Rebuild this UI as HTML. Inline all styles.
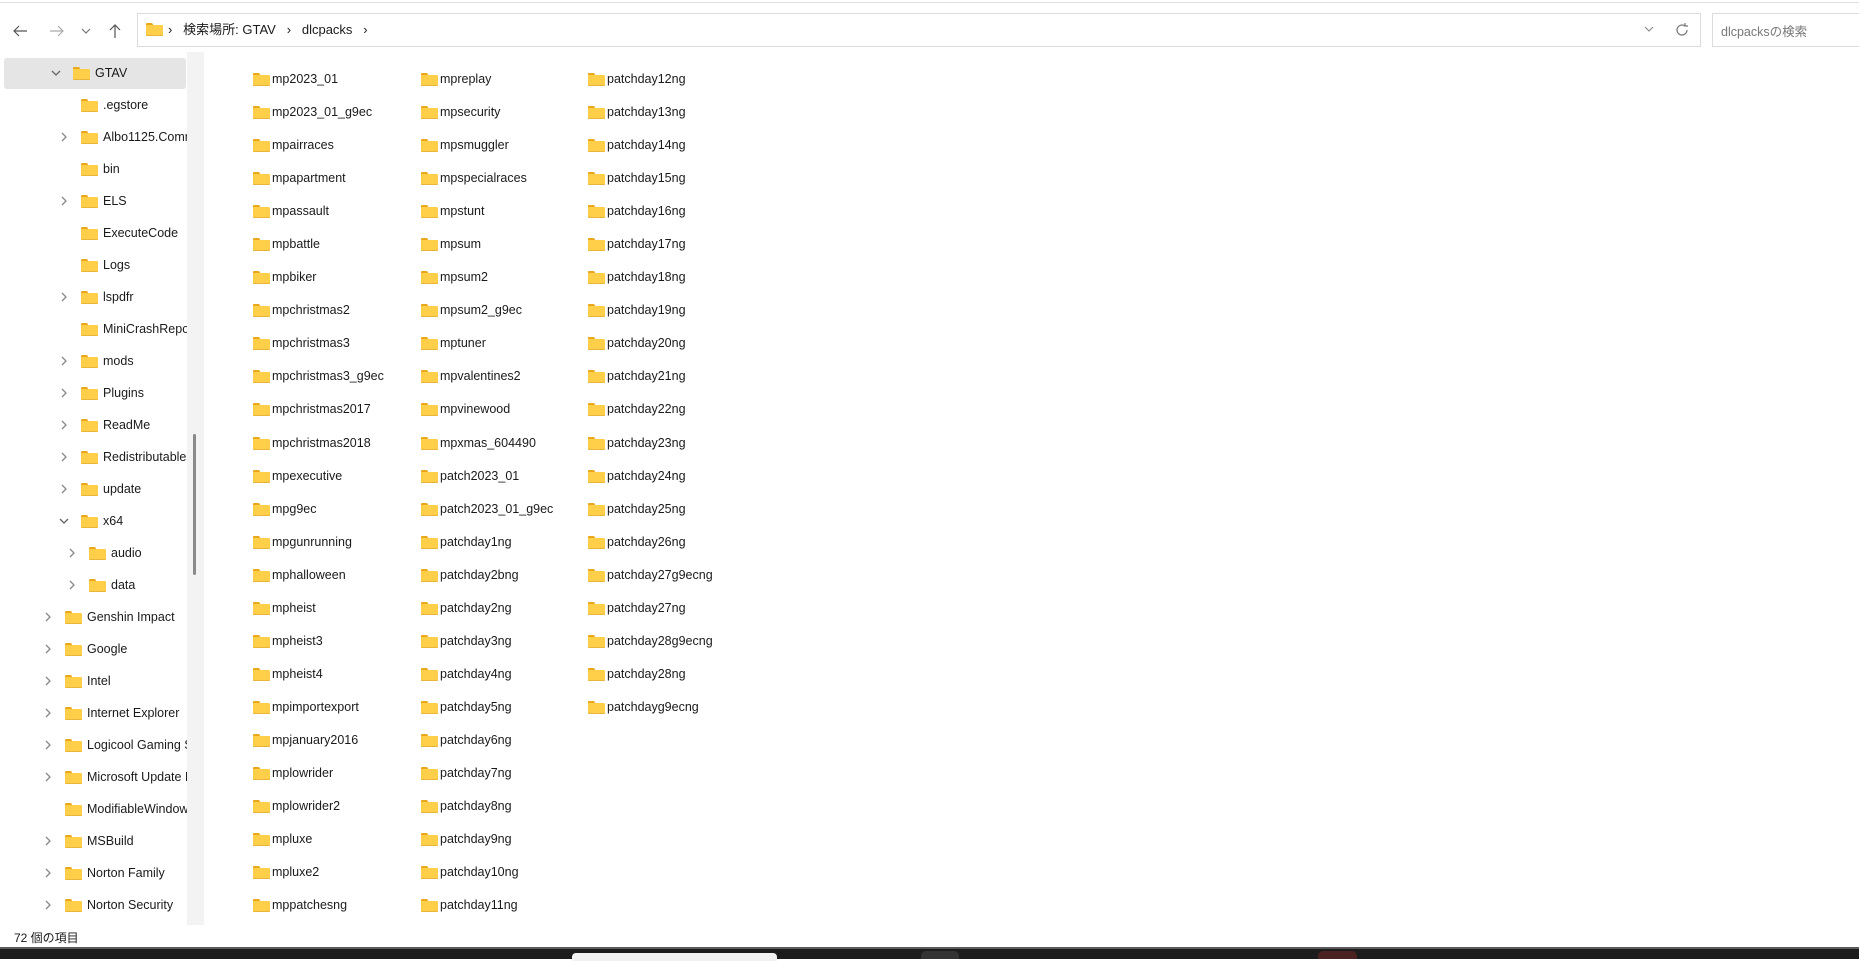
<!DOCTYPE html>
<html><head><meta charset="utf-8"><style>
*{margin:0;padding:0;box-sizing:border-box}
body{width:1859px;height:959px;background:#fff;position:relative;overflow:hidden;font-family:"Liberation Sans","Noto Sans CJK JP",sans-serif;font-size:12.5px;color:#1a1a1a}
.a{position:absolute}
.f{position:absolute;width:17px;height:13px}
.f:before{content:"";position:absolute;left:0;top:0;width:7px;height:4px;background:#e9a81c;border-radius:1px 2px 0 0}
.f:after{content:"";position:absolute;left:0;top:2px;width:17px;height:11px;background:#ffcf4a;border-radius:1px;box-shadow:inset 0 -1px 0 #e9b53a}
.col div{position:relative;height:33.05px;line-height:33px;white-space:nowrap}
.col .f{left:-19px;top:10px}
.sb div{position:absolute;height:32px;line-height:32px;white-space:nowrap}
.sb .f{left:-22px;top:10px}
</style></head><body>
<div class="a" style="left:0;top:2px;width:1859px;height:1px;background:#e0e0e0"></div>
<svg class="a" style="left:0;top:18px" width="140" height="26" stroke-width="1.2" fill="none">
<path d="M27 13H14M19 8l-5 5 5 5" stroke="#555"/>
<path d="M50 13h13M58 8l5 5-5 5" stroke="#aaa"/>
<path d="M82 11l4 4 4-4" stroke="#777"/>
<path d="M115 20V7M110 12l5-5 5 5" stroke="#555"/>
</svg>
<div class="a" style="left:137px;top:13px;width:1564px;height:34px;border:1px solid #dcdcdc"></div>
<div class="f" style="left:146px;top:23px"></div>
<div class="a" style="left:168px;top:20px;line-height:20px;font-size:13px">›&nbsp;&nbsp; 検索場所: GTAV&nbsp;&nbsp; ›&nbsp;&nbsp; dlcpacks&nbsp;&nbsp; ›</div>
<svg class="a" style="left:1643px;top:24px" width="12" height="10" fill="none" stroke="#888" stroke-width="1.1"><path d="M2 3l4 4 4-4"/></svg>
<svg class="a" style="left:1674px;top:22px" width="16" height="16" fill="none" stroke="#777" stroke-width="1.2"><path d="M13 8a5 5 0 1 1-2-4M11 1v3h3"/></svg>
<div class="a" style="left:1712px;top:13px;width:160px;height:34px;border:1px solid #dcdcdc"></div>
<div class="a" style="left:1721px;top:21px;color:#777">dlcpacksの検索</div>

<div class="a" style="left:4px;top:58px;width:182px;height:31px;background:#e5e5e5;border-radius:3px"></div>
<div class="a" style="left:187px;top:52px;width:17px;height:873px;background:#f3f3f3"></div>
<div class="a" style="left:193px;top:434px;width:3px;height:141px;background:#8a8a8a;border-radius:2px"></div>

<svg class="a" style="left:0;top:0" width="90" height="930" fill="none" stroke="#666" stroke-width="1.3">
<path d="M52 71l4 4 4-4M60 519l4 4 4-4"/>
<g stroke="#888">
<path d="M62 133l4 4-4 4M62 197l4 4-4 4M62 293l4 4-4 4M62 357l4 4-4 4M62 389l4 4-4 4M62 421l4 4-4 4M62 453l4 4-4 4M62 485l4 4-4 4"/>
<path d="M70 549l4 4-4 4M70 581l4 4-4 4"/>
<path d="M46 613l4 4-4 4M46 645l4 4-4 4M46 677l4 4-4 4M46 709l4 4-4 4M46 741l4 4-4 4M46 773l4 4-4 4M46 837l4 4-4 4M46 869l4 4-4 4M46 901l4 4-4 4"/>
</g></svg>

<div class="sb">
<div style="left:95px;top:57px"><span class="f"></span>GTAV</div>
<div style="left:103px;top:89px"><span class="f"></span>.egstore</div>
<div style="left:103px;top:121px;width:84px;overflow:hidden">Albo1125.Common</div>
<div style="left:103px;top:153px"><span class="f"></span>bin</div>
<div style="left:103px;top:185px"><span class="f"></span>ELS</div>
<div style="left:103px;top:217px"><span class="f"></span>ExecuteCode</div>
<div style="left:103px;top:249px"><span class="f"></span>Logs</div>
<div style="left:103px;top:281px"><span class="f"></span>lspdfr</div>
<div style="left:103px;top:313px;width:84px;overflow:hidden">MiniCrashReporter</div>
<div style="left:103px;top:345px"><span class="f"></span>mods</div>
<div style="left:103px;top:377px"><span class="f"></span>Plugins</div>
<div style="left:103px;top:409px"><span class="f"></span>ReadMe</div>
<div style="left:103px;top:441px;width:84px;overflow:hidden">Redistributables</div>
<div style="left:103px;top:473px"><span class="f"></span>update</div>
<div style="left:103px;top:505px"><span class="f"></span>x64</div>
<div style="left:111px;top:537px"><span class="f"></span>audio</div>
<div style="left:111px;top:569px"><span class="f"></span>data</div>
<div style="left:87px;top:601px"><span class="f"></span>Genshin Impact</div>
<div style="left:87px;top:633px"><span class="f"></span>Google</div>
<div style="left:87px;top:665px"><span class="f"></span>Intel</div>
<div style="left:87px;top:697px"><span class="f"></span>Internet Explorer</div>
<div style="left:87px;top:729px;width:100px;overflow:hidden">Logicool Gaming Software</div>
<div style="left:87px;top:761px;width:100px;overflow:hidden">Microsoft Update Health</div>
<div style="left:87px;top:793px;width:100px;overflow:hidden">ModifiableWindowsApps</div>
<div style="left:87px;top:825px"><span class="f"></span>MSBuild</div>
<div style="left:87px;top:857px"><span class="f"></span>Norton Family</div>
<div style="left:87px;top:889px"><span class="f"></span>Norton Security</div>
</div>
<div class="f" style="left:81px;top:131px"></div>
<div class="f" style="left:81px;top:323px"></div>
<div class="f" style="left:81px;top:451px"></div>
<div class="f" style="left:65px;top:739px"></div>
<div class="f" style="left:65px;top:771px"></div>
<div class="f" style="left:65px;top:803px"></div>

<div class="a col" style="left:272px;top:63px">
<div><span class="f"></span>mp2023_01</div><div><span class="f"></span>mp2023_01_g9ec</div><div><span class="f"></span>mpairraces</div><div><span class="f"></span>mpapartment</div><div><span class="f"></span>mpassault</div><div><span class="f"></span>mpbattle</div><div><span class="f"></span>mpbiker</div><div><span class="f"></span>mpchristmas2</div><div><span class="f"></span>mpchristmas3</div><div><span class="f"></span>mpchristmas3_g9ec</div><div><span class="f"></span>mpchristmas2017</div><div><span class="f"></span>mpchristmas2018</div><div><span class="f"></span>mpexecutive</div><div><span class="f"></span>mpg9ec</div><div><span class="f"></span>mpgunrunning</div><div><span class="f"></span>mphalloween</div><div><span class="f"></span>mpheist</div><div><span class="f"></span>mpheist3</div><div><span class="f"></span>mpheist4</div><div><span class="f"></span>mpimportexport</div><div><span class="f"></span>mpjanuary2016</div><div><span class="f"></span>mplowrider</div><div><span class="f"></span>mplowrider2</div><div><span class="f"></span>mpluxe</div><div><span class="f"></span>mpluxe2</div><div><span class="f"></span>mppatchesng</div>
</div>
<div class="a col" style="left:440px;top:63px">
<div><span class="f"></span>mpreplay</div><div><span class="f"></span>mpsecurity</div><div><span class="f"></span>mpsmuggler</div><div><span class="f"></span>mpspecialraces</div><div><span class="f"></span>mpstunt</div><div><span class="f"></span>mpsum</div><div><span class="f"></span>mpsum2</div><div><span class="f"></span>mpsum2_g9ec</div><div><span class="f"></span>mptuner</div><div><span class="f"></span>mpvalentines2</div><div><span class="f"></span>mpvinewood</div><div><span class="f"></span>mpxmas_604490</div><div><span class="f"></span>patch2023_01</div><div><span class="f"></span>patch2023_01_g9ec</div><div><span class="f"></span>patchday1ng</div><div><span class="f"></span>patchday2bng</div><div><span class="f"></span>patchday2ng</div><div><span class="f"></span>patchday3ng</div><div><span class="f"></span>patchday4ng</div><div><span class="f"></span>patchday5ng</div><div><span class="f"></span>patchday6ng</div><div><span class="f"></span>patchday7ng</div><div><span class="f"></span>patchday8ng</div><div><span class="f"></span>patchday9ng</div><div><span class="f"></span>patchday10ng</div><div><span class="f"></span>patchday11ng</div>
</div>
<div class="a col" style="left:607px;top:63px">
<div><span class="f"></span>patchday12ng</div><div><span class="f"></span>patchday13ng</div><div><span class="f"></span>patchday14ng</div><div><span class="f"></span>patchday15ng</div><div><span class="f"></span>patchday16ng</div><div><span class="f"></span>patchday17ng</div><div><span class="f"></span>patchday18ng</div><div><span class="f"></span>patchday19ng</div><div><span class="f"></span>patchday20ng</div><div><span class="f"></span>patchday21ng</div><div><span class="f"></span>patchday22ng</div><div><span class="f"></span>patchday23ng</div><div><span class="f"></span>patchday24ng</div><div><span class="f"></span>patchday25ng</div><div><span class="f"></span>patchday26ng</div><div><span class="f"></span>patchday27g9ecng</div><div><span class="f"></span>patchday27ng</div><div><span class="f"></span>patchday28g9ecng</div><div><span class="f"></span>patchday28ng</div><div><span class="f"></span>patchdayg9ecng</div>
</div>

<div class="a" style="left:14px;top:929px;font-size:12px">72 個の項目</div>
<div class="a" style="left:0;top:947px;width:1859px;height:2px;background:#5a5a5a"></div>
<div class="a" style="left:0;top:949px;width:1859px;height:10px;background:#1c1c1c"></div>
<div class="a" style="left:572px;top:953px;width:205px;height:8px;background:#f2f2f2;border-radius:4px 4px 0 0"></div>
<div class="a" style="left:921px;top:951px;width:38px;height:8px;background:#333;border-radius:5px 5px 0 0"></div>
<div class="a" style="left:1318px;top:951px;width:39px;height:8px;background:#4a2222;border-radius:5px 5px 0 0"></div>
</body></html>
